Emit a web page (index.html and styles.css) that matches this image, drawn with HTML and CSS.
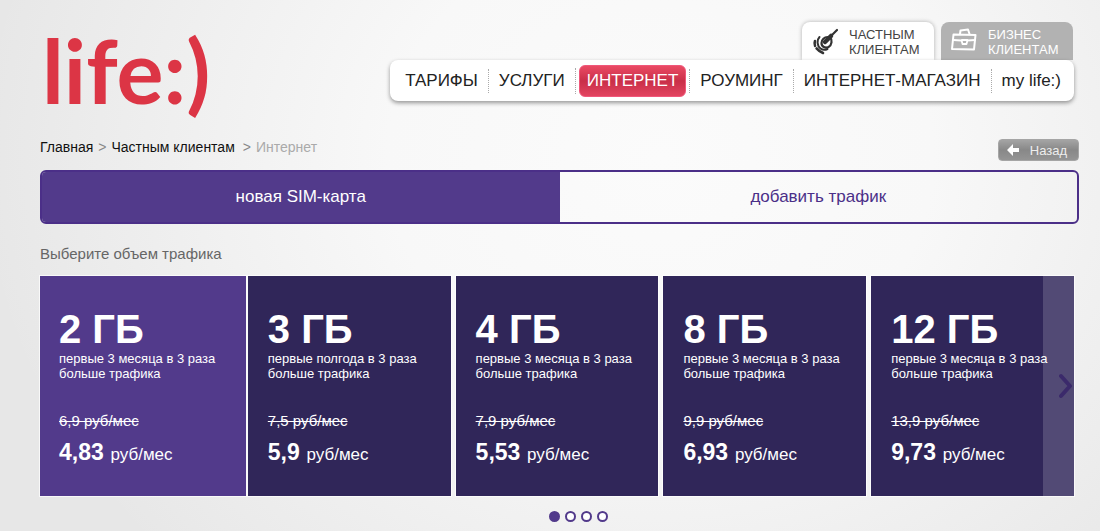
FILE: index.html
```html
<!DOCTYPE html>
<html lang="ru">
<head>
<meta charset="utf-8">
<title>life:) — Интернет</title>
<link rel="stylesheet" href="styles.css">
</head>
<body>
<div class="page">
  <header class="header">
    <a class="logo" href="#">life:)</a>
    <div class="menu">
      <div class="audience">
        <a class="audience-tab active" href="#">
          <svg class="audience-icon" width="26" height="28" viewBox="0 0 26 28" fill="none" stroke="#333" stroke-linecap="round" stroke-linejoin="round">
            <path d="M25 3 18 10" stroke-width="2.200"/>
            <path d="M19 9 13 15" stroke-width="4.500"/>
            <path d="M18 10c2.500 3 2 8-1.500 10-3 1.500-7 0-7-4 0-3.500 3-6 6-6" stroke-width="2.200"/>
            <path d="M7.500 10c-3 3-2.500 9 1 11.500 2 1.500 5 1.500 7 .5" stroke-width="2"/>
            <path d="M3 14C1.500 18 4 23 11 26" stroke-width="2.600" stroke-dasharray="5 3 12"/>
          </svg>
          <span>ЧАСТНЫМ<br>КЛИЕНТАМ</span>
        </a>
        <a class="audience-tab" href="#">
          <svg class="audience-icon" width="26" height="26" viewBox="0 0 26 26" fill="none" stroke="#fff" stroke-linecap="round" stroke-linejoin="round" stroke-width="2">
            <path d="M2.500 7.500 24.500 8 23 22.500 1 22Z"/>
            <path d="M9 7 9.500 3.500 17 2.500 18.500 7"/>
            <path d="M2.500 13 10 13.500M16.500 13.500 24 13M10.500 13h6l-1 4h-4z" stroke-width="1.800"/>
          </svg>
          <span>БИЗНЕС<br>КЛИЕНТАМ</span>
        </a>
      </div>
      <nav class="nav">
        <a href="#">ТАРИФЫ</a>
        <a href="#">УСЛУГИ</a>
        <a class="current" href="#"><span>ИНТЕРНЕТ</span></a>
        <a href="#">РОУМИНГ</a>
        <a href="#">ИНТЕРНЕТ-МАГАЗИН</a>
        <a href="#">my life:)</a>
      </nav>
    </div>
  </header>

  <div class="trail">
    <div class="crumbs">
      <a href="#">Главная</a><span class="sep">&gt;</span><a href="#">Частным клиентам</a><span class="sep wide">&gt;</span><span class="here">Интернет</span>
    </div>
    <button class="back" type="button">
      <svg width="12" height="12" viewBox="0 0 12 12" fill="#fff"><path d="M0 6 6 0v4h6v4H6v4z"/></svg>
      Назад
    </button>
  </div>

  <div class="switch">
    <button class="switch-item selected" type="button">новая SIM-карта</button>
    <button class="switch-item" type="button">добавить трафик</button>
  </div>

  <h1 class="title">Выберите объем трафика</h1>

  <div class="carousel">
    <div class="cards">
      <article class="card chosen">
        <h2>2 ГБ</h2>
        <p class="note">первые 3 месяца в 3 раза<br>больше трафика</p>
        <p class="old"><s>6,9 руб/мес</s></p>
        <p class="price"><b>4,83</b> руб/мес</p>
      </article>
      <article class="card">
        <h2>3 ГБ</h2>
        <p class="note">первые полгода в 3 раза<br>больше трафика</p>
        <p class="old"><s>7,5 руб/мес</s></p>
        <p class="price"><b>5,9</b> руб/мес</p>
      </article>
      <article class="card">
        <h2>4 ГБ</h2>
        <p class="note">первые 3 месяца в 3 раза<br>больше трафика</p>
        <p class="old"><s>7,9 руб/мес</s></p>
        <p class="price"><b>5,53</b> руб/мес</p>
      </article>
      <article class="card">
        <h2>8 ГБ</h2>
        <p class="note">первые 3 месяца в 3 раза<br>больше трафика</p>
        <p class="old"><s>9,9 руб/мес</s></p>
        <p class="price"><b>6,93</b> руб/мес</p>
      </article>
      <article class="card">
        <h2>12 ГБ</h2>
        <p class="note">первые 3 месяца в 3 раза<br>больше трафика</p>
        <p class="old"><s>13,9 руб/мес</s></p>
        <p class="price"><b>9,73</b> руб/мес</p>
      </article>
    </div>
    <button class="next" type="button" aria-label="Вперёд">
      <svg width="14" height="26" viewBox="0 0 14 26" fill="none" stroke="#3b2a6b" stroke-width="4" stroke-linecap="round" stroke-linejoin="round"><path d="M2 3 11 13 2 23"/></svg>
    </button>
  </div>

  <div class="dots">
    <button class="dot on" type="button" aria-label="1"></button>
    <button class="dot" type="button" aria-label="2"></button>
    <button class="dot" type="button" aria-label="3"></button>
    <button class="dot" type="button" aria-label="4"></button>
  </div>
</div>
</body>
</html>
```
FILE: styles.css
```css
* { box-sizing: border-box; }
body {
  margin: 0;
  font-family: "Liberation Sans", Arial, sans-serif;
  color: #222;
  background:
    radial-gradient(ellipse 62% 110% at 60% 30%, #fbfbfb 0%, #f8f8f8 40%, rgba(248, 248, 248, 0) 100%),
    #e7e7e7;
  min-height: 100vh;
}
a { color: inherit; text-decoration: none; }
button { font: inherit; cursor: pointer; border: 0; padding: 0; }
h1, h2, p { margin: 0; font-weight: normal; }
.page { padding: 22px 21px 8px 40px; }

.header { display: flex; justify-content: space-between; align-items: flex-start; height: 117px; }
.logo {
  font: 700 88px/96px Lato, sans-serif;
  color: #dc3545;
  padding-left: 2px;
}
.menu { padding-right: 5px; }
.audience { display: flex; justify-content: flex-end; gap: 7px; padding-right: 1px; }
.audience-tab {
  display: flex;
  align-items: flex-start;
  gap: 11px;
  width: 132px;
  height: 38px;
  padding: 5px 0 0 10px;
  border-radius: 8px 8px 0 0;
  background: #b2b2b2;
  color: #fff;
  font-size: 13px;
  line-height: 15px;
}
.audience-tab.active { background: #fff; color: #444; box-shadow: 0 0 4px rgba(0, 0, 0, .3); }
.nav {
  position: relative;
  display: flex;
  align-items: center;
  height: 41px;
  padding: 0 3px 0 5px;
  border-radius: 8px;
  background: #fff;
  box-shadow: 0 2px 4px rgba(0, 0, 0, .4);
  font-size: 17px;
}
.nav a { line-height: 24px; padding: 0 10px; border-left: 1px dotted #aaa; }
.nav a:first-child { border-left: 0; }
.nav .current { padding: 0 3px; }
.nav .current span {
  display: block;
  padding: 0 7px;
  line-height: 30px;
  margin: -3px 0;
  border-radius: 6px;
  border: 1px solid #f0577a;
  color: #fff;
  background: linear-gradient(#ea4a64, #c92f48 50%, #e24460);
}

.trail { display: flex; justify-content: space-between; height: 31px; }
.crumbs { font-size: 14px; line-height: 17px; color: #111; }
.sep { color: #888; margin: 0 5px; }
.sep.wide { margin-left: 8px; }
.here { color: #aaa; }
.back {
  display: flex;
  align-items: center;
  gap: 11px;
  height: 22px;
  padding: 0 11px 0 8px;
  border-radius: 4px;
  border: 1px solid #a5a5a5;
  background: linear-gradient(#a4a4a4, #888 50%, #949494);
  color: #eee;
  font-size: 13px;
}

.switch {
  display: grid;
  grid-template-columns: 1fr 1fr;
  height: 54px;
  border: 2px solid #4b2f88;
  border-radius: 6px;
  overflow: hidden;
}
.switch-item { background: none; color: #4b2f88; font-size: 17px; }
.switch-item.selected { background: #523a8b; color: #fff; }

.title { font-size: 15px; line-height: 18px; color: #666; margin: 21px 0 13px; }

.carousel { position: relative; margin-right: 5px; }
.cards { display: grid; grid-template-columns: repeat(5, 1fr); gap: 5px; }
.card {
  height: 220px;
  padding: 31px 0 0 20px;
  background: #302659;
  color: #fff;
  white-space: nowrap;
  box-shadow: 0 0 0 1px rgba(255, 255, 255, .7);
}
.card.chosen { background: #523a8b; margin-right: -3px; padding-left: 19px; }
.card h2 { font-size: 40px; line-height: 44px; font-weight: bold; }
.note { font-size: 13px; line-height: 15px; }
.old { font-size: 15px; line-height: 16px; margin-top: 32px; }
.price { font-size: 17px; line-height: 28px; margin-top: 9px; }
.price b { font-size: 23px; margin-right: 2px; }
.next {
  position: absolute;
  top: 0;
  right: 0;
  bottom: 0;
  display: flex;
  align-items: center;
  justify-content: flex-end;
  width: 31px;
  padding-right: 1px;
  background: rgba(255, 255, 255, .17);
}

.dots { display: flex; justify-content: center; gap: 5px; margin-top: 15px; padding-left: 37px; }
.dot { width: 11px; height: 11px; border-radius: 50%; border: 2px solid #523a8b; background: #fff; }
.dot.on { background: #523a8b; }
```
